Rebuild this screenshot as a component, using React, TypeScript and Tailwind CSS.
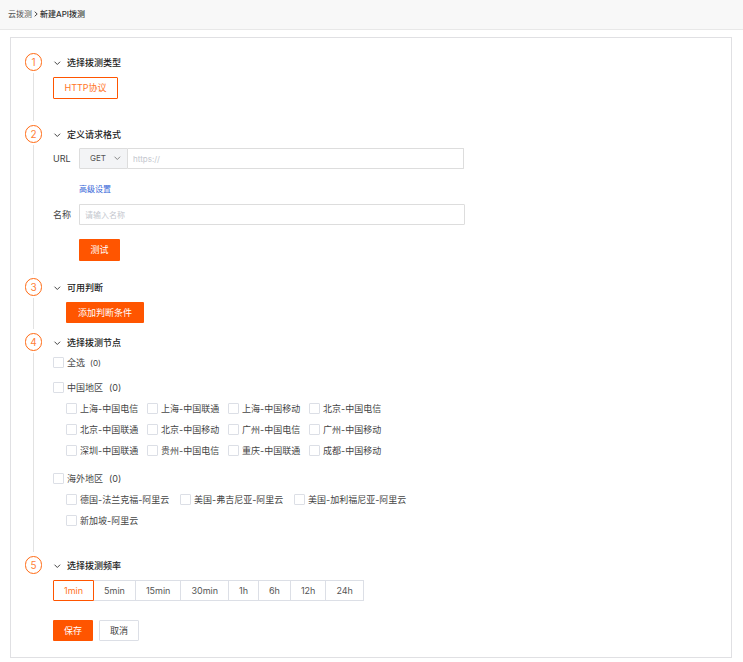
import { useState, type ReactNode } from "react";

const chinaNodes = [
  "上海-中国电信", "上海-中国联通", "上海-中国移动", "北京-中国电信",
  "北京-中国联通", "北京-中国移动", "广州-中国电信", "广州-中国移动",
  "深圳-中国联通", "贵州-中国电信", "重庆-中国联通", "成都-中国移动",
];
const overseasNodes = [
  "德国-法兰克福-阿里云", "美国-弗吉尼亚-阿里云", "美国-加利福尼亚-阿里云", "新加坡-阿里云",
];
const rates = ["1min", "5min", "15min", "30min", "1h", "6h", "12h", "24h"];

function Chevron({ className }: { className: string }) {
  return (
    <svg viewBox="0 0 8 6" fill="none" stroke="currentColor" aria-hidden="true" className={className}>
      <path d="M1.5 1.7 4.3 4.5 7.1 1.7" />
    </svg>
  );
}

function Step({ n, title, last, className, children }: {
  n: number; title: string; last?: boolean; className: string; children: ReactNode;
}) {
  return (
    <li className="flex gap-[11px]">
      <div className="flex w-[17px] shrink-0 flex-col items-center">
        <span className="flex h-[18px] w-[17px] shrink-0 items-center justify-center rounded-full border border-[#ff6a13] text-[10px] leading-none text-[#ff8038]">
          {n}
        </span>
        {!last && <span className="mt-[2px] mb-1 w-px flex-1 bg-[#e2e2e2]" />}
      </div>
      <section className={`min-w-0 flex-1 ${className}`}>
        <h2 className="flex h-[19px] items-center gap-[6px] font-medium text-[#222]">
          <Chevron className="h-[6px] w-2 text-[#444]" />
          {title}
        </h2>
        {children}
      </section>
    </li>
  );
}

function Check({ label, count, smallCount }: { label: string; count?: number; smallCount?: boolean }) {
  return (
    <label className="flex h-[21px] items-center gap-[3px] whitespace-nowrap">
      <input
        type="checkbox"
        className="h-[11px] w-[11px] shrink-0 appearance-none rounded-[1px] border border-[#dcdfe6] bg-white checked:bg-[#ff5500]"
      />
      {label}
      {count !== undefined && <span className={smallCount ? "ml-[2px] text-[8px]" : "ml-[3px]"}>({count})</span>}
    </label>
  );
}

const solid = "flex items-center justify-center rounded-[1px] bg-[#ff5500] text-white";
const field = "min-w-0 flex-1 rounded-r-[1px] border border-[#ddd] px-[5px] text-[8px] text-[#555] outline-none placeholder:text-[#c4c7ce]";

export default function App() {
  const [rate, setRate] = useState("1min");
  return (
    <div className="bg-white pb-1 font-[Inter,'Noto_Sans_CJK_SC',sans-serif] text-[9px] leading-[12px] text-[#444]">
      <nav className="flex h-[30px] items-center gap-[2px] border-b border-[#e8e8e8] bg-[#f8f8f8] px-2 pb-px text-[8px]">
        <a href="#" className="text-[#555]">云拨测</a>
        <svg viewBox="0 0 4 6" fill="none" stroke="#444" aria-hidden="true" className="h-[6px] w-1">
          <path d="M.7.7 3.2 3 .7 5.3" />
        </svg>
        <span className="font-medium text-[#333]">新建API拨测</span>
      </nav>

      <main className="mt-[7px] mr-[11px] ml-[10px] border border-[#e0e0e3] px-[14px] pt-[15px] pb-4">
        <ol>
          <Step n={1} title="选择拨测类型" className="pb-[26px]">
            <button type="button" className="mt-[5px] flex h-[22px] w-[65px] items-center justify-center rounded-[1px] border border-[#ff5500] text-[#ff7426]">
              HTTP协议
            </button>
          </Step>

          <Step n={2} title="定义请求格式" className="pb-[17px]">
            <div className="mt-1 flex h-[21px] max-w-[411px] items-center">
              <label htmlFor="url" className="w-[26px]">URL</label>
              <div className="relative h-full w-[49px]">
                <select aria-label="请求方法" className="h-full w-full appearance-none rounded-l-[1px] border border-[#ddd] bg-[#f3f4f6] pb-[2px] pl-[10px] text-[8px] text-[#555] outline-none">
                  <option>GET</option>
                  <option>POST</option>
                </select>
                <Chevron className="pointer-events-none absolute top-[7px] right-[7px] h-[6px] w-2 text-[#888]" />
              </div>
              <input id="url" type="text" placeholder="https://" className={`${field} h-full border-l-0`} />
            </div>
            <a href="#" className="mt-[14px] ml-[26px] inline-flex h-3 items-center align-top text-[8px] text-[#3665d8]">高级设置</a>
            <div className="mt-[9px] flex h-[21px] max-w-[412px] items-center">
              <label htmlFor="name" className="w-[26px]">名称</label>
              <input id="name" type="text" placeholder="请输入名称" className={`${field} h-full`} />
            </div>
            <button type="button" className={`${solid} mt-[14px] ml-[26px] h-[22px] w-[41px]`}>测试</button>
          </Step>

          <Step n={3} title="可用判断" className="pb-[10px]">
            <button type="button" className={`${solid} mt-[5px] ml-[13px] h-[21px] w-[78px]`}>添加判断条件</button>
          </Step>

          <Step n={4} title="选择拨测节点" className="pb-[25px]">
            <Check label="全选" count={0} smallCount />
            <div className="mt-1"><Check label="中国地区" count={0} /></div>
            <div className="ml-[13px] grid grid-cols-[repeat(4,81px)]">
              {chinaNodes.map((node) => <Check key={node} label={node} />)}
            </div>
            <div className="mt-[7px]"><Check label="海外地区" count={0} /></div>
            <div className="ml-[13px] grid grid-cols-[repeat(3,114px)]">
              {overseasNodes.map((node) => <Check key={node} label={node} />)}
            </div>
          </Step>

          <Step n={5} title="选择拨测频率" last className="">
            <div className="mt-[5px] flex h-[21px]">
              {rates.map((item) => (
                <button
                  key={item}
                  type="button"
                  aria-pressed={item === rate}
                  onClick={() => setRate(item)}
                  className={
                    item === rate
                      ? "rounded-l-[1px] border border-[#ff5500] px-[10px] text-[#ff7426]"
                      : "border border-l-0 border-[#dcdfe6] px-[10px] text-[#555]"
                  }
                >
                  {item}
                </button>
              ))}
            </div>
            <div className="mt-[19px] flex h-[21px] gap-[6px]">
              <button type="button" className={`${solid} w-10`}>保存</button>
              <button type="button" className="w-10 rounded-[1px] border border-[#dcdfe6]">取消</button>
            </div>
          </Step>
        </ol>
      </main>
    </div>
  );
}
